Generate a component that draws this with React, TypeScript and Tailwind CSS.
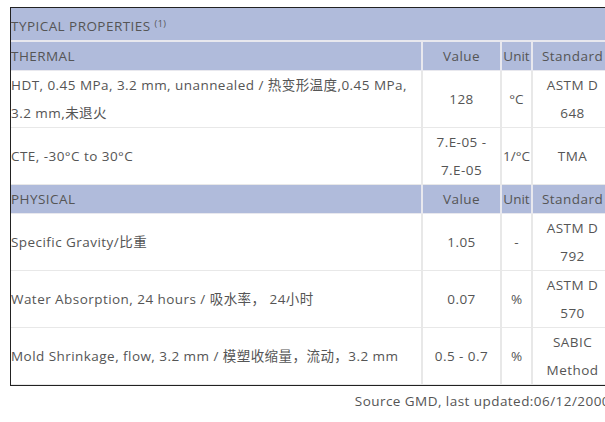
import React from 'react';

type Row = { name: string; value: React.ReactNode; unit: string; standard: React.ReactNode };

const thermal: Row[] = [
  {
    name: 'HDT, 0.45 MPa, 3.2 mm, unannealed / 热变形温度,0.45 MPa, 3.2 mm,未退火',
    value: '128',
    unit: '°C',
    standard: 'ASTM D 648',
  },
  { name: 'CTE, -30°C to 30°C', value: '7.E-05 - 7.E-05', unit: '1/°C', standard: 'TMA' },
];

const physical: Row[] = [
  { name: 'Specific Gravity/比重', value: '1.05', unit: '-', standard: 'ASTM D 792' },
  { name: 'Water Absorption, 24 hours / 吸水率，  24小时', value: '0.07', unit: '%', standard: 'ASTM D 570' },
  { name: 'Mold Shrinkage, flow, 3.2 mm / 模塑收缩量，流动，3.2 mm', value: '0.5 - 0.7', unit: '%', standard: 'SABIC Method' },
];

const SectionHead = ({ title }: { title: string }) => (
  <tr className="bg-[#b0bbdb] h-[29px]">
    <td className="border-b border-[#e8e8ee] p-0 align-middle">{title}</td>
    <td className="border-l-2 border-b border-[#e8e8ee] text-center p-0">Value</td>
    <td className="border-l-2 border-b border-[#e8e8ee] text-center p-0 tracking-normal">Unit</td>
    <td className="border-l-2 border-b border-[#e8e8ee] text-center p-0">Standard</td>
  </tr>
);

const DataRow = ({ row }: { row: Row }) => (
  <tr className="h-[57px]">
    <td className="border-b border-[#e8e8e8] p-0 align-middle">{row.name}</td>
    <td className="border-l-2 border-b border-[#e8e8e8] text-center p-0 px-2">{row.value}</td>
    <td className="border-l-2 border-b border-[#e8e8e8] text-center p-0 tracking-normal">{row.unit}</td>
    <td className="border-l-2 border-b border-[#e8e8e8] text-center p-0 px-3">{row.standard}</td>
  </tr>
);

const App: React.FC = () => {
  return (
    <div
      className="w-[605px] h-[422px] overflow-hidden bg-white text-[#555] text-[13.5px] leading-[28px] tracking-[0.45px]"
      style={{ fontFamily: '"Open Sans", "Noto Sans CJK SC", sans-serif' }}
    >
      <div className="pt-[7px] pl-[10px] w-[612px]">
        <div className="w-[602px] border-t border-l border-b border-[#222]">
          <table className="w-full table-fixed border-collapse">
            <colgroup>
              <col className="w-[411px]" />
              <col className="w-[79px]" />
              <col className="w-[31px]" />
              <col className="w-[80px]" />
            </colgroup>
            <tbody>
              <tr className="bg-[#b0bbdb] h-[33px]">
                <td colSpan={4} className="border-b-2 border-[#e8e8ee] p-0 pt-[4px]">
                  TYPICAL PROPERTIES <sup className="text-[9px]">(1)</sup>
                </td>
              </tr>
              <SectionHead title="THERMAL" />
              {thermal.map((r) => (
                <DataRow key={r.name} row={r} />
              ))}
              <SectionHead title="PHYSICAL" />
              {physical.map((r) => (
                <DataRow key={r.name} row={r} />
              ))}
            </tbody>
          </table>
        </div>
        <p className="text-right w-[600px] mt-[1px] whitespace-nowrap">Source GMD, last updated:06/12/2000</p>
      </div>
    </div>
  );
};

export default App;
